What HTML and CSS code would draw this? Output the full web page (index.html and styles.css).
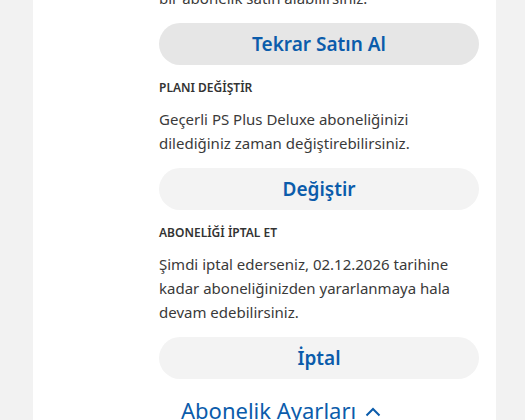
FILE: index.html
```html
<!DOCTYPE html>
<html lang="tr">
<head>
<meta charset="utf-8">
<link rel="stylesheet" href="styles.css">
</head>
<body>
<div class="page">
  <div class="card">
    <div class="content">
      <p class="body first">bir abonelik satın alabilirsiniz.</p>
      <button class="btn btn-dark">Tekrar Satın Al</button>
      <h3 class="label">PLANI DEĞİŞTİR</h3>
      <p class="body">Geçerli PS Plus Deluxe aboneliğinizi dilediğiniz zaman değiştirebilirsiniz.</p>
      <button class="btn">Değiştir</button>
      <h3 class="label">ABONELİĞİ İPTAL ET</h3>
      <p class="body">Şimdi iptal ederseniz, 02.12.2026 tarihine kadar aboneliğinizden yararlanmaya hala devam edebilirsiniz.</p>
      <button class="btn">İptal</button>
      <div class="toggle">
        <span>Abonelik Ayarları</span>
        <svg class="chev" width="16" height="10" viewBox="0 0 16 10"><path d="M1.5 8.5 L8 2 L14.5 8.5" fill="none" stroke="#0b5cab" stroke-width="2"/></svg>
      </div>
    </div>
  </div>
</div>
</body>
</html>
```
FILE: styles.css
```css
html, body {
  margin: 0;
  padding: 0;
  background: #f2f2f2;
  height: 100%;
  overflow: hidden;
}
.page {
  display: flex;
  height: 100%;
}
.card {
  margin-left: 33px;
  width: 463px;
  background: #ffffff;
  padding: 0 17px 0 126px;
  box-sizing: border-box;
}
.content {
  margin-top: -14px;
  display: flex;
  flex-direction: column;
  font-family: "Noto Sans", "Open Sans", sans-serif;
  color: #363636;
}
.body {
  margin: 0;
  font-size: 15px;
  line-height: 24px;
  color: #3a3a3a;
}
.btn {
  display: block;
  width: 320px;
  height: 42px;
  border: none;
  border-radius: 21px;
  background: #f3f3f3;
  color: #0b5cab;
  font-family: "Noto Sans", "Open Sans", sans-serif;
  font-weight: 600;
  font-size: 19px;
  padding: 0;
  margin-bottom: 15px;
  flex-shrink: 0;
}
.btn-dark { background: #e6e6e6; }
.label {
  margin: 0 0 11px;
  font-size: 12px;
  line-height: 16px;
  font-weight: 600;
  color: #333;
}
.body + .btn { margin-top: 13px; }
.toggle {
  margin-top: 1px;
  display: flex;
  align-items: center;
  gap: 9px;
  padding-left: 22px;
  font-size: 22px;
  line-height: 30px;
  color: #0b5cab;
  white-space: nowrap;
}
.chev { margin-top: 4px; }
```
